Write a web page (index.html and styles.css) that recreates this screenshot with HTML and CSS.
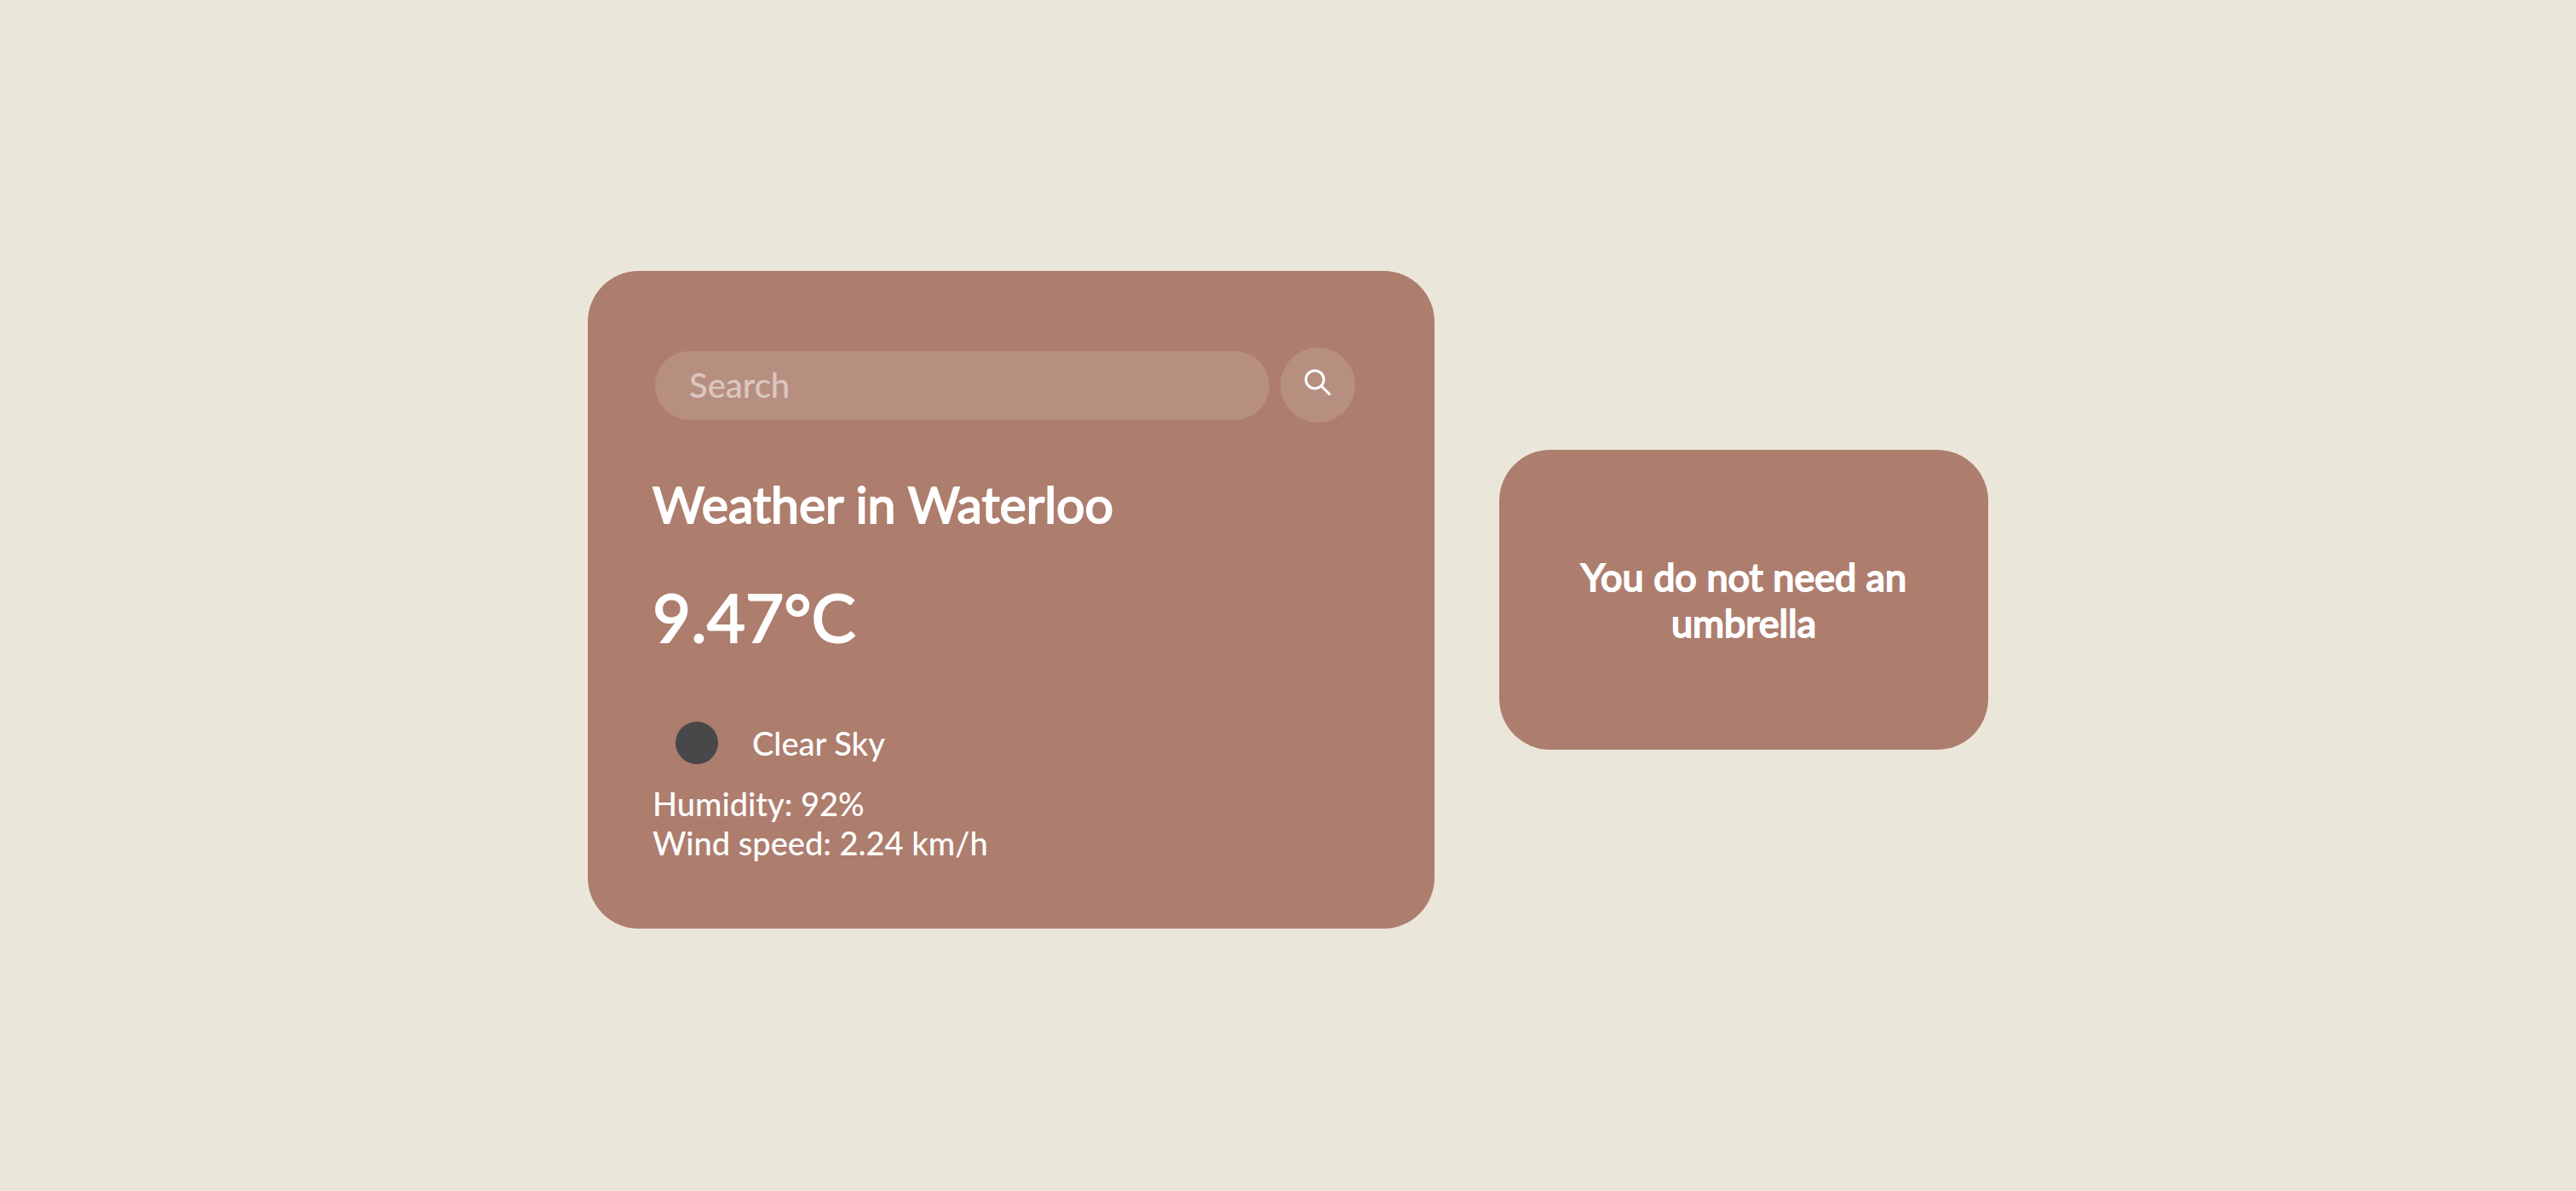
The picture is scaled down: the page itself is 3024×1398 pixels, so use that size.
FILE: index.html
```html
<!DOCTYPE html>
<html lang="en">
<head>
  <meta charset="utf-8">
  <meta name="viewport" content="width=device-width, initial-scale=1">
  <title>Weather</title>
  <link rel="stylesheet" href="styles.css">
</head>
<body>
  <main class="app">
    <section class="card weather">
      <form class="search">
        <input class="search-bar" type="text" placeholder="Search" aria-label="Search">
        <button class="search-button" type="button" aria-label="Find city">
          <svg class="search-icon" viewBox="0 0 32 32" fill="none" stroke="currentColor" stroke-width="3" aria-hidden="true">
            <circle cx="12.5" cy="12.5" r="10.5"/>
            <path d="M20 20L30.5 30.5"/>
          </svg>
        </button>
      </form>
      <h2 class="city">Weather in Waterloo</h2>
      <h1 class="temp">9.47°C</h1>
      <div class="condition">
        <svg class="condition-icon" viewBox="0 0 100 100" aria-hidden="true">
          <circle cx="50" cy="50" r="25" fill="#48484a"/>
        </svg>
        <span>Clear Sky</span>
      </div>
      <div class="humidity">Humidity: 92%</div>
      <div class="wind">Wind speed: 2.24 km/h</div>
    </section>
    <section class="card umbrella">
      <h3 class="advice">You do not need an umbrella</h3>
    </section>
  </main>
</body>
</html>
```

FILE: styles.css
```css
* {
  box-sizing: border-box;
}

body {
  margin: 0;
  background: #eae6da;
  color: #fff;
  font-family: Lato, sans-serif;
  font-size: 38px;
  font-weight: 500;
  line-height: 46px;
}

.app {
  display: flex;
  flex-wrap: wrap;
  justify-content: center;
  align-items: center;
  align-content: center;
  gap: 76px;
  min-height: 100vh;
  padding-top: 10px;
}

.card {
  width: 100%;
  border-radius: 60px;
  background: #ad7d6d;
}

.weather {
  max-width: 994px;
  padding: 90px 93px 78px 76px;
}

.umbrella {
  max-width: 574px;
  padding: 122px 76px;
  text-align: center;
}

.search {
  display: flex;
  align-items: center;
  gap: 13px;
  padding-left: 3px;
  margin-bottom: 60px;
}

.search-bar {
  flex: 1;
  min-width: 0;
  height: 81px;
  padding: 0 40px;
  border: 0;
  border-radius: 41px;
  background: #b78f81;
  color: #fff;
  font: inherit;
  font-size: 40px;
}

.search-bar::placeholder {
  color: #dbc7c0;
  opacity: 1;
}

.search-button {
  display: flex;
  justify-content: center;
  align-items: center;
  width: 88px;
  height: 88px;
  padding: 0 0 6px;
  border: 0;
  border-radius: 50%;
  background: #b78f81;
  color: #fff;
}

.search-icon {
  width: 32px;
  height: 32px;
}

.city,
.temp,
.advice {
  margin: 0;
  font-weight: 400;
  -webkit-text-stroke: 2px currentColor;
}

.city {
  margin-bottom: 48px;
  font-size: 59px;
  line-height: 72px;
}

.temp {
  margin-bottom: 50px;
  font-size: 78px;
  line-height: 96px;
}

.advice {
  font-size: 45px;
  line-height: 54px;
}

.condition {
  display: flex;
  align-items: center;
  gap: 15px;
  margin-bottom: -2px;
  padding-left: 2px;
}

.condition-icon {
  width: 100px;
  height: 100px;
}
```
